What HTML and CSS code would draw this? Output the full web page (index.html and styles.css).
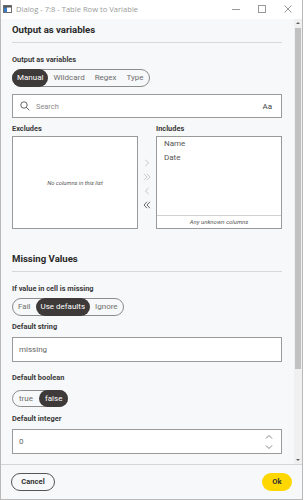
FILE: index.html
```html
<!DOCTYPE html>
<html>
<head>
<meta charset="utf-8">
<link rel="stylesheet" href="styles.css">
</head>
<body>
<div class="window">
  <div class="titlebar">
    <svg class="app-icon" width="9" height="8" viewBox="0 0 9 8"><rect x="0.5" y="0.5" width="8" height="7" fill="#fff" stroke="#6d6d6d"/><rect x="1" y="1" width="3" height="6" fill="#3a7bc8"/><rect x="1" y="1" width="7" height="1.5" fill="#555"/></svg>
    <span class="title">Dialog - 7:8 - Table Row to Variable</span>
    <div class="winctl">
      <svg width="10" height="10" viewBox="0 0 10 10"><path d="M1 5.5h8" stroke="#999" stroke-width="1"/></svg>
      <svg width="10" height="10" viewBox="0 0 10 10"><rect x="1.5" y="1.5" width="7" height="7" fill="none" stroke="#999"/></svg>
      <svg width="10" height="10" viewBox="0 0 10 10"><path d="M1.5 1.5l7 7M8.5 1.5l-7 7" stroke="#999"/></svg>
    </div>
  </div>
  <div class="main">
    <div class="content">
      <h2 class="section-title">Output as variables</h2>
      <div class="label first">Output as variables</div>
      <div class="seg">
        <span class="seg-item active">Manual</span>
        <span class="seg-item">Wildcard</span>
        <span class="seg-item">Regex</span>
        <span class="seg-item">Type</span>
      </div>
      <div class="search">
        <svg class="search-icon" width="10" height="10" viewBox="0 0 10 10"><circle cx="4" cy="4" r="3.2" fill="none" stroke="#555" stroke-width="0.9"/><path d="M6.3 6.3l3 3" stroke="#555" stroke-width="0.9"/></svg>
        <span class="placeholder">Search</span>
        <span class="aa">Aa</span>
      </div>
      <div class="twin">
        <div class="col">
          <div class="label">Excludes</div>
          <div class="listbox empty"><span class="empty-text">No columns in this list</span></div>
        </div>
        <div class="arrows">
          <svg width="6" height="8" viewBox="0 0 6 8"><path d="M1.5 0.8l3 3.2-3 3.2" fill="none" stroke="#bbb" stroke-width="0.8"/></svg>
          <svg width="8" height="8" viewBox="0 0 8 8"><path d="M1 0.8l3 3.2-3 3.2M4 0.8l3 3.2-3 3.2" fill="none" stroke="#bbb" stroke-width="0.8"/></svg>
          <svg width="6" height="8" viewBox="0 0 6 8"><path d="M4.5 0.8l-3 3.2 3 3.2" fill="none" stroke="#bbb" stroke-width="0.8"/></svg>
          <svg width="8" height="8" viewBox="0 0 8 8"><path d="M4 0.8l-3 3.2 3 3.2M7 0.8l-3 3.2 3 3.2" fill="none" stroke="#444" stroke-width="0.8"/></svg>
        </div>
        <div class="col">
          <div class="label">Includes</div>
          <div class="listbox incl">
            <div class="items">
              <div class="item">Name</div>
              <div class="item">Date</div>
            </div>
            <div class="unknown">Any unknown columns</div>
          </div>
        </div>
      </div>

      <h2 class="section-title second">Missing Values</h2>
      <div class="label first">If value in cell is missing</div>
      <div class="seg">
        <span class="seg-item">Fail</span>
        <span class="seg-item active">Use defaults</span>
        <span class="seg-item">Ignore</span>
      </div>
      <div class="label field-label">Default string</div>
      <div class="input">missing</div>
      <div class="label field-label gap">Default boolean</div>
      <div class="seg bool">
        <span class="seg-item">true</span>
        <span class="seg-item active">false</span>
      </div>
      <div class="label field-label">Default integer</div>
      <div class="input number">
        <span>0</span>
        <svg class="spin" width="8" height="16" viewBox="0 0 8 16"><path d="M1 4.5l3-3 3 3M1 11.5l3 3 3-3" fill="none" stroke="#666" stroke-width="0.8"/></svg>
      </div>
    </div>
    <div class="scrollbar">
      <svg class="sb-arrow" width="8" height="8" viewBox="0 0 8 8"><path d="M2 5h4L4 3z" fill="#606060"/></svg>
      <div class="sb-track"><div class="sb-thumb"></div></div>
      <svg class="sb-arrow" width="8" height="8" viewBox="0 0 8 8"><path d="M2 3h4L4 5z" fill="#606060"/></svg>
    </div>
  </div>
  <div class="footer">
    <button class="btn cancel">Cancel</button>
    <button class="btn ok">Ok</button>
  </div>
</div>
</body>
</html>
```
FILE: styles.css
```css
* { box-sizing: border-box; }
html, body { margin: 0; padding: 0; background: #ffffff; }
body { width: 305px; height: 500px; overflow: hidden; font-family: Roboto, "Liberation Sans", sans-serif; }

.window {
  width: 303px;
  height: 500px;
  display: flex;
  flex-direction: column;
  border-left: 1px solid #b9b9b9;
  border-right: 1px solid #b9b9b9;
  border-bottom: 1px solid #b9b9b9;
  background: #f7f8f9;
}

.titlebar {
  height: 19px;
  flex: none;
  background: #ffffff;
  display: flex;
  align-items: center;
  padding-left: 2px;
}
.app-icon { margin-right: 4px; margin-top: -2px; }
.title { font-family: "Open Sans", "Liberation Sans", sans-serif; font-size: 7.6px; color: #9a9a9a; margin-top: -2px; }
.winctl { margin-left: auto; display: flex; gap: 16px; margin-right: 9px; margin-top: -2px; }

.main { flex: 1; display: flex; min-height: 0; }
.content {
  flex: 1;
  min-width: 0;
  overflow: hidden;
  padding: 0 12px 0 11px;
}

.section-title {
  margin: 3px 0 0;
  font-size: 9.6px;
  font-weight: 700;
  color: #2a2a2a;
  line-height: 16px;
  padding-bottom: 4px;
  border-bottom: 1px solid #d8d8d8;
}
.section-title.second { margin-top: 22px; }

.label {
  font-size: 7.4px;
  font-weight: 700;
  color: #3a3a3a;
  line-height: 12px;
}
.label.first { margin-top: 11px; margin-bottom: 3px; }
.label.field-label { margin-top: 4px; margin-bottom: 4px; }
.label.field-label.gap { margin-top: 10px; margin-bottom: 6px; }

.seg {
  display: inline-flex;
  align-items: stretch;
  height: 18px;
  border: 1px solid #8c8c8c;
  border-radius: 9px;
  vertical-align: top;
}
.seg-item {
  font-size: 8px;
  color: #6e6e6e;
  padding: 0 5px;
  line-height: 16px;
}
.seg-item.active {
  background: #3e3a39;
  color: #ffffff;
  border-radius: 9px;
  margin: -1px 0;
  line-height: 18px;
}
.seg-item.active:first-child { margin-left: -1px; }
.seg-item.active:last-child { margin-right: -1px; }
.seg.bool { height: 17px; }
.seg.bool .seg-item { line-height: 15px; padding: 0 6px; }
.seg.bool .seg-item.active { line-height: 17px; }

.search {
  margin-top: 6px;
  height: 24px;
  background: #ffffff;
  border: 1px solid #9a9a9a;
  display: flex;
  align-items: center;
  padding: 0 9px 0 7px;
}
.search-icon { margin-right: 6px; }
.placeholder { font-size: 7.4px; color: #8a8a8a; }
.aa { margin-left: auto; font-size: 8px; color: #444; }

.twin {
  display: grid;
  grid-template-columns: 1fr 18px 1fr;
  margin-top: 5px;
}
.col { display: flex; flex-direction: column; }
.listbox {
  margin-top: 1px;
  height: 93px;
  background: #ffffff;
  border: 1px solid #9a9a9a;
}
.listbox.empty { display: flex; align-items: center; justify-content: center; }
.empty-text { font-size: 5.8px; font-style: italic; color: #555; }
.listbox.incl { display: flex; flex-direction: column; }
.items { flex: 1; }
.item { font-size: 8px; color: #555; line-height: 14px; padding-left: 7px; }
.unknown {
  height: 13px;
  border-top: 1px solid #d0d0d0;
  font-size: 6px;
  font-style: italic;
  color: #555;
  text-align: center;
  line-height: 12px;
}
.arrows {
  display: flex;
  flex-direction: column;
  align-items: center;
  justify-content: center;
  gap: 6px;
  padding-top: 16px;
}

.input {
  height: 25px;
  background: #ffffff;
  border: 1px solid #9a9a9a;
  font-size: 8px;
  color: #666;
  display: flex;
  align-items: center;
  padding: 0 8px 0 6px;
}
.input.number { justify-content: space-between; }

.scrollbar {
  width: 8px;
  flex: none;
  background: #f0f0f0;
  display: flex;
  flex-direction: column;
}
.sb-arrow { flex: none; }
.sb-track { flex: 1; padding: 1px 1px; }
.sb-thumb { height: 341px; background: #c1c1c1; }

.footer {
  height: 35px;
  flex: none;
  border-top: 1px solid #d4d4d4;
  display: flex;
  align-items: center;
  justify-content: space-between;
  padding: 0 10px 0 10px;
}
.btn {
  font-family: Roboto, "Liberation Sans", sans-serif;
  font-size: 7.6px;
  font-weight: 700;
  color: #333;
  height: 18px;
  line-height: 16px;
  border-radius: 9px;
  padding: 0;
  display: inline-flex;
  align-items: center;
  justify-content: center;
  cursor: pointer;
}
.cancel { width: 44px; background: transparent; border: 1px solid #555; }
.ok { width: 30px; background: #ffd700; border: none; }
```
